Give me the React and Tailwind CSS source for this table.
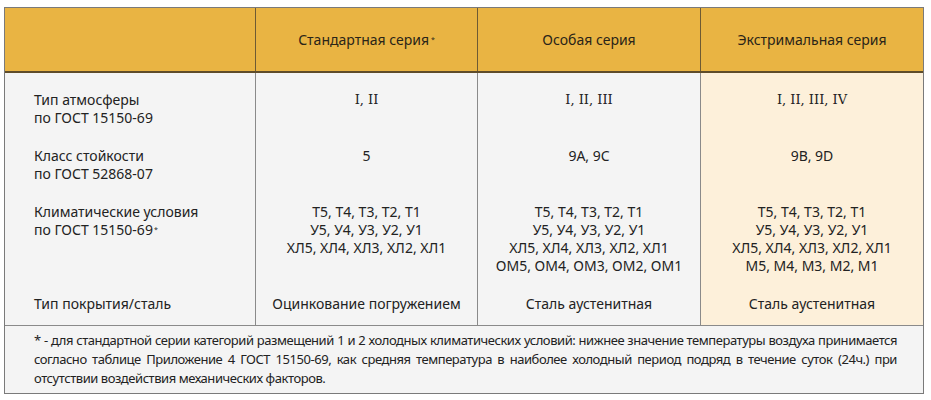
const rows = [
  {
    label: ["Тип атмосферы", "по ГОСТ 15150-69"],
    values: [["I, II"], ["I, II, III"], ["I, II, III, IV"]],
    serif: true,
    pad: "pt-[18px] pb-[10px]",
  },
  {
    label: ["Класс стойкости", "по ГОСТ 52868-07"],
    values: [["5"], ["9A, 9C"], ["9B, 9D"]],
    pad: "pt-[10px] pb-[10px]",
  },
  {
    label: ["Климатические условия", "по ГОСТ 15150-69"],
    star: true,
    values: [
      ["Т5, Т4, Т3, Т2, Т1", "У5, У4, У3, У2, У1", "ХЛ5, ХЛ4, ХЛ3, ХЛ2, ХЛ1"],
      ["Т5, Т4, Т3, Т2, Т1", "У5, У4, У3, У2, У1", "ХЛ5, ХЛ4, ХЛ3, ХЛ2, ХЛ1", "ОМ5, ОМ4, ОМ3, ОМ2, ОМ1"],
      ["Т5, Т4, Т3, Т2, Т1", "У5, У4, У3, У2, У1", "ХЛ5, ХЛ4, ХЛ3, ХЛ2, ХЛ1", "М5, М4, М3, М2, М1"],
    ],
    pad: "pt-[10px] pb-[10px]",
  },
  {
    label: ["Тип покрытия/сталь"],
    values: [["Оцинкование погружением"], ["Сталь аустенитная"], ["Сталь аустенитная"]],
    pad: "pt-[10px] pb-[12px]",
  },
];

const note = [
  "* - для стандартной серии категорий размещений 1 и 2 холодных климатических условий: нижнее значение температуры воздуха принимается",
  "согласно таблице Приложение 4 ГОСТ 15150-69, как средняя температура в наиболее холодный период подряд в течение суток (24ч.) при",
  "отсутствии воздействия механических факторов.",
];

function Row({ r }) {
  return (
    <div className="grid grid-cols-[251px_222px_223px_1fr]">
      <div className={`bg-[#f4f4f4] border-r border-[#8a8a8a] pl-[29px] ${r.pad}`}>
        {r.label.map((l, j) => (
          <div key={j}>
            {l}
            {r.star && j === r.label.length - 1 && (
              <sup className="text-[7px] ml-[1px] relative -top-[3px]">*</sup>
            )}
          </div>
        ))}
      </div>
      {r.values.map((v, c) => (
        <div
          key={c}
          className={`text-center ${r.pad} ${
            c === 2 ? "bg-[#fdf0da]" : "bg-[#f4f4f4] border-r border-[#8a8a8a]"
          }`}
        >
          {v.map((l, i) => (
            <div key={i} className={r.serif ? "font-['DejaVu_Serif',serif] text-[13px]" : ""}>
              {l}
            </div>
          ))}
        </div>
      ))}
    </div>
  );
}

export default function App() {
  return (
    <div className="w-[931px] h-[400px] bg-white pt-[7px] pl-[4px] font-['Noto_Sans',sans-serif] text-[14px] leading-[18px] text-[#222]">
      <div className="w-[920px] border border-[#7a7a7a]">
        {/* header */}
        <div className="grid grid-cols-[251px_222px_223px_1fr] h-[65px] bg-[#e9b443] border-b-2 border-[#5e4c2a] text-[14px] text-[#2a2418]">
          <div className="border-r border-[#6e5a33]" />
          <div className="flex items-center justify-center border-r border-[#6e5a33]">
            <span>
              Стандартная серия<sup className="text-[7px] ml-[2px] relative -top-[3px]">*</sup>
            </span>
          </div>
          <div className="flex items-center justify-center border-r border-[#6e5a33]">Особая серия</div>
          <div className="flex items-center justify-center">Экстримальная серия</div>
        </div>

        {/* body */}
        <div className="border-b border-[#8a8a8a]">
          {rows.map((r, i) => (
            <Row key={i} r={r} />
          ))}
        </div>

        {/* footnote */}
        <div className="bg-[#f4f4f4] pl-[29px] pr-[26px] pt-[5px] pb-[5px] text-[13px] leading-[19px] tracking-[-0.45px]">
          {note.map((l, i) => (
            <div key={i} className={i < 2 ? "text-justify [text-align-last:justify]" : ""}>
              {l}
            </div>
          ))}
        </div>
      </div>
    </div>
  );
}
